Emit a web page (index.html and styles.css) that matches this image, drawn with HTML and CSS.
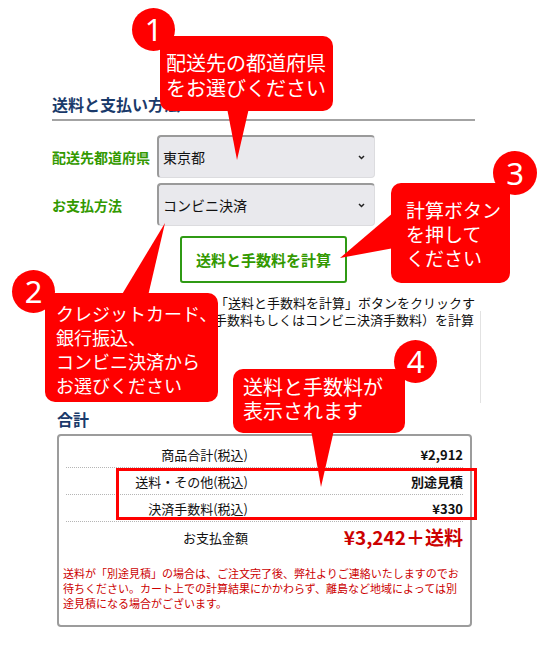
FILE: index.html
```html
<!DOCTYPE html>
<html lang="ja">
<head>
<meta charset="utf-8">
<title>送料と支払い方法</title>
<link rel="stylesheet" href="styles.css">
</head>
<body>
<div class="page">
  <h2 class="sec-title">送料と支払い方法</h2>

  <div class="form-row">
    <span class="label">配送先都道府県</span>
    <div class="select">東京都<svg class="chev" width="7" height="5" viewBox="0 0 7 5"><path d="M1 1l2.5 2.5L6 1" fill="none" stroke="#222" stroke-width="1.5"/></svg></div>
  </div>
  <div class="form-row">
    <span class="label">お支払方法</span>
    <div class="select">コンビニ決済<svg class="chev" width="7" height="5" viewBox="0 0 7 5"><path d="M1 1l2.5 2.5L6 1" fill="none" stroke="#222" stroke-width="1.5"/></svg></div>
  </div>

  <div class="btn-row"><button class="calc-btn" type="button">送料と手数料を計算</button></div>

  <div class="calc-note">
    <div class="line">「送料と手数料を計算」ボタンをクリックす</div>
    <div class="info-area">
      <div class="line">手数料もしくはコンビニ決済手数料）を計算</div>
    </div>
  </div>

  <h2 class="sec-title total-title">合計</h2>
  <div class="total-box">
    <div class="total-table">
      <div class="row"><span class="k">商品合計(税込)</span><span class="v">¥2,912</span></div>
      <div class="row"><span class="k">送料・その他(税込)</span><span class="v">別途見積</span></div>
      <div class="row"><span class="k">決済手数料(税込)</span><span class="v">¥330</span></div>
      <div class="row last"><span class="k">お支払金額</span><span class="v grand">¥3,242＋送料</span></div>
    </div>
    <p class="note">送料が「別途見積」の場合は、ご注文完了後、弊社よりご連絡いたしますのでお待ちください。カート上での計算結果にかかわらず、離島など地域によっては別途見積になる場合がございます。</p>
  </div>
</div>

<!-- annotation overlay -->
<div class="highlight"></div>

<svg class="pointers" width="550" height="647" viewBox="0 0 550 647">
  <polygon points="227,108 249,108 237,160" fill="#ff0000"/>
  <polygon points="121,296 148,296 165,223" fill="#ff0000"/>
  <polygon points="394,212 394,248 340,258" fill="#ff0000"/>
  <polygon points="311,430 334,430 321,487" fill="#ff0000"/>
</svg>

<div class="num n1">1</div>
<div class="callout c1">配送先の都道府県<br>をお選びください</div>

<div class="num n2">2</div>
<div class="callout c2">クレジットカード、<br>銀行振込、<br>コンビニ決済から<br>お選びください</div>

<div class="num n3">3</div>
<div class="callout c3">計算ボタン<br>を押して<br>ください</div>

<div class="num n4">4</div>
<div class="callout c4">送料と手数料が<br>表示されます</div>
</body>
</html>
```

FILE: styles.css
```css
* { box-sizing: border-box; }

html, body {
  margin: 0;
  padding: 0;
  background: #ffffff;
}

body {
  width: 550px;
  height: 647px;
  position: relative;
  overflow: hidden;
  font-family: "Noto Sans CJK JP", "Noto Sans", sans-serif;
  color: #111;
}

.page {
  padding: 94px 0 0 52px;
}

.sec-title {
  margin: 0;
  width: 423px;
  font-size: 16px;
  line-height: 20px;
  font-weight: bold;
  color: #1a3a6a;
  padding-bottom: 5px;
  border-bottom: 2px solid #a3a3a3;
  white-space: nowrap;
}

.form-row {
  display: flex;
  align-items: center;
  height: 43px;
  margin-top: 5px;
}
.sec-title + .form-row { margin-top: 14px; }

.label {
  width: 105px;
  font-size: 14px;
  font-weight: bold;
  color: #339900;
  line-height: 20px;
}

.select {
  width: 218px;
  height: 43px;
  display: flex;
  align-items: center;
  justify-content: space-between;
  padding: 0 9px 0 4px;
  background: #e9e9ed;
  border-top: 2px solid #9a9a9a;
  border-left: 2px solid #9a9a9a;
  border-right: 1px solid #dcdcdf;
  border-bottom: 1px solid #dcdcdf;
  border-radius: 4px;
  font-size: 14px;
  color: #111;
}
.chev { display: block; }

.btn-row {
  margin-top: 10px;
  padding-left: 128px;
}

.calc-btn {
  display: block;
  width: 167px;
  height: 47px;
  margin: 0;
  padding: 0;
  background: #fff;
  border: 2px solid #2f9a14;
  border-radius: 3px;
  font-family: "Noto Sans CJK JP", "Noto Sans", sans-serif;
  font-size: 15px;
  font-weight: bold;
  color: #339900;
}

.calc-note {
  margin-top: 11px;
  width: 429px;
  font-size: 13px;
  line-height: 17px;
  color: #111;
}
.calc-note .line {
  white-space: nowrap;
  text-align: right;
  padding-right: 6px;
}
.info-area {
  height: 92px;
  border-right: 1px solid #e2e2e2;
}

.total-title {
  margin-top: 6px;
  border-bottom: none;
  padding: 0 0 0 5px;
}

.total-box {
  margin: 5px 0 0 5px;
  width: 415px;
  border: 2px solid #9c9c9c;
  border-radius: 4px;
  padding: 5px 7px 14px 7px;
}

.total-table .row {
  display: grid;
  grid-template-columns: 182px 1fr;
  height: 27px;
  align-items: center;
  border-bottom: 1px dotted #b5b5b5;
  font-size: 13px;
}
.total-table .row.last {
  height: 30px;
  border-bottom: none;
}
.total-table .k { text-align: right; }
.total-table .v {
  text-align: right;
  font-weight: bold;
}
.total-table .grand {
  font-size: 19px;
  color: #cc0000;
  line-height: 24px;
}

.note {
  margin: 14px 0 0 -3px;
  width: 400px;
  font-size: 11px;
  line-height: 15px;
  color: #cc0000;
}

/* ===== annotations (overlay) ===== */
.highlight {
  position: absolute;
  left: 116px;
  top: 468px;
  width: 361px;
  height: 52px;
  border: 3px solid #ff0000;
}

.pointers {
  position: absolute;
  left: 0;
  top: 0;
  pointer-events: none;
}

.num {
  position: absolute;
  width: 43px;
  height: 43px;
  border-radius: 50%;
  background: #ff0000;
  color: #fff;
  font-family: "Noto Sans", "DejaVu Sans", sans-serif;
  font-size: 31px;
  line-height: 43px;
  text-align: center;
}
.n1 { left: 132px; top: 8px; }
.n2 { left: 12px; top: 270px; }
.n3 { left: 493px; top: 151px; width: 44px; height: 44px; line-height: 44px; }
.n4 { left: 394px; top: 340px; }

.callout {
  position: absolute;
  background: #ff0000;
  color: #fff;
  border-radius: 10px;
  font-size: 20px;
  line-height: 24px;
  white-space: nowrap;
}
.c1 {
  left: 160px; top: 36px; width: 173px; height: 75px;
  padding: 14px 0 0 6px;
  line-height: 25px;
}
.c2 {
  left: 45px; top: 293px; width: 173px; height: 109px;
  padding: 8px 0 0 11px;
  font-size: 18px;
}
.c3 {
  left: 391px; top: 183px; width: 119px; height: 100px;
  padding: 15px 0 0 15px;
  font-size: 19px;
}
.c4 {
  left: 233px; top: 369px; width: 172px; height: 64px;
  padding: 6px 0 0 10px;
}
```
